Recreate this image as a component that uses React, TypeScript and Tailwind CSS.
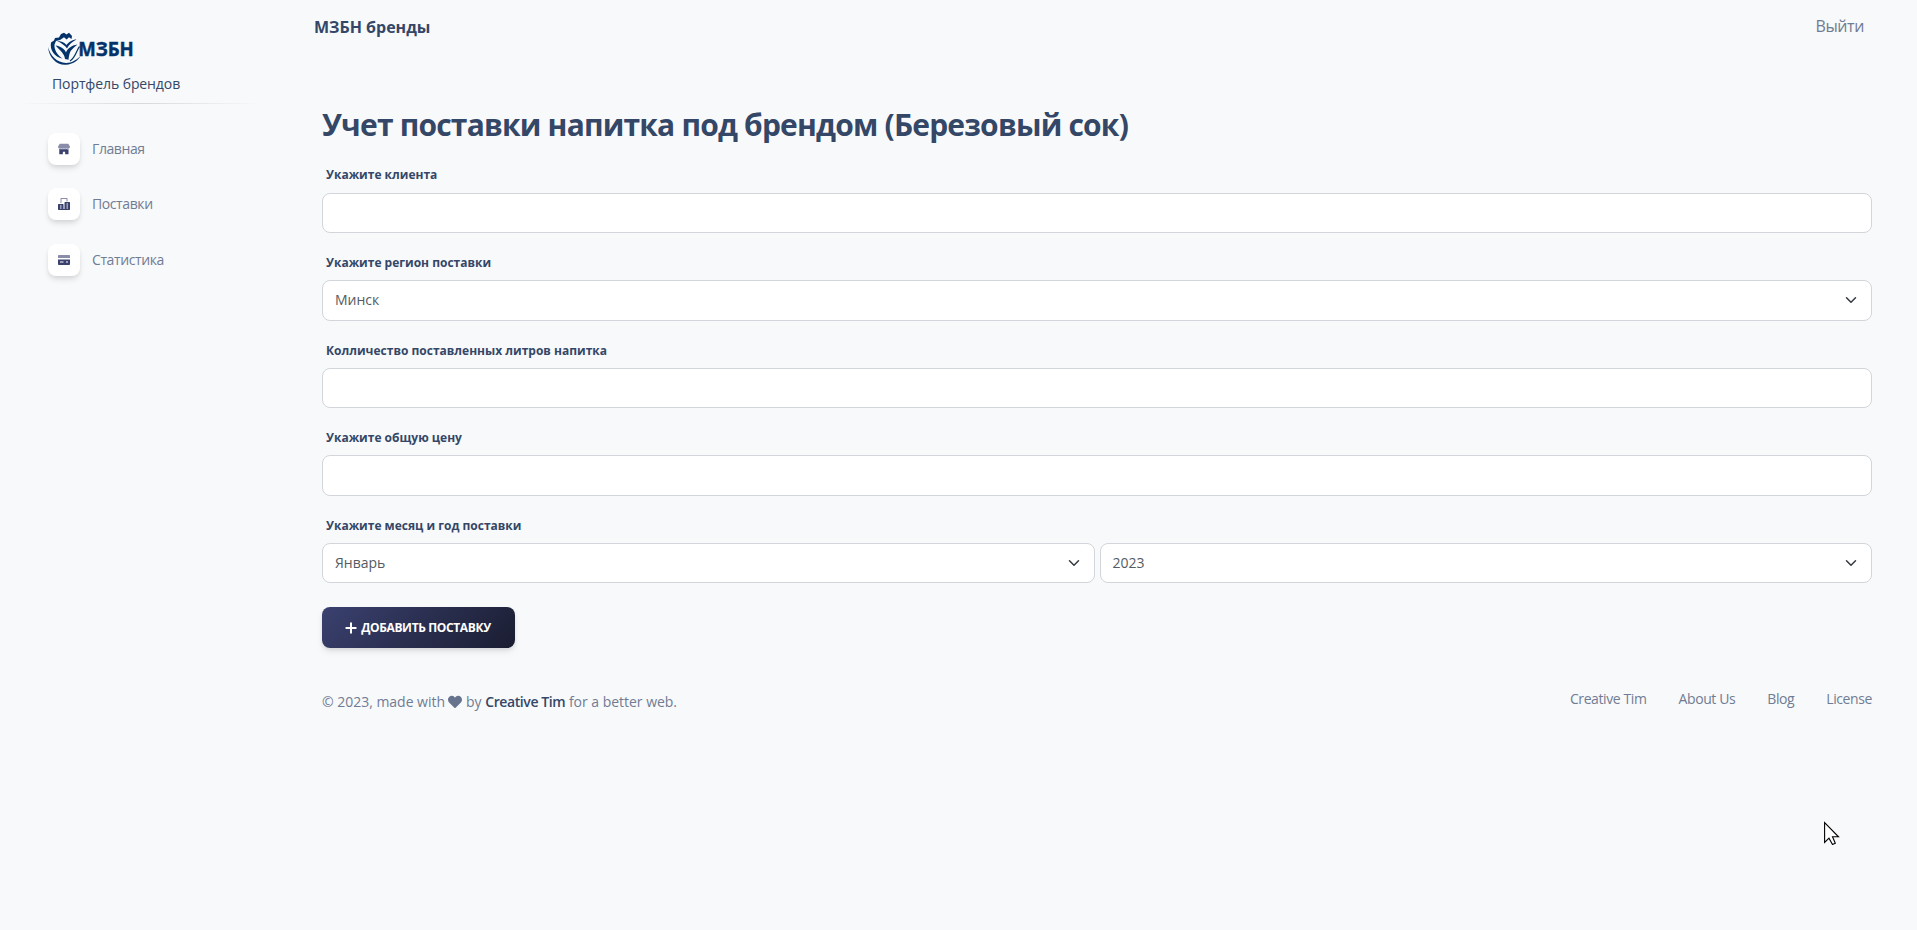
import type { ReactNode } from "react";

function Logo() {
  return (
    <svg className="block h-[34px] w-[90px]" viewBox="0 0 90 34" fill="none">
      <g fill="#04336b">
        <path d="M0 15C1 26 9 33.500 18 32.800C25 32.300 30 28.500 32.500 24C28 28.500 23.500 31 18 30.900C9 30.700 2.500 24 0 15Z" />
        <path d="M3 10.500L6 8.500L7 6L11 5.500L13 2L16 .8L18.500 2.500L21 .8L24 4L23.500 7L21 5.200L18.600 7.500L16 5.200L12 8L8 9L6.500 12.500C6 17 8.500 22.500 14.500 26.500C6.500 25 1.500 18 3 10.500Z" />
        <path d="M7.500 13.500C12 14 16.500 16.500 18 20.500C19.500 16.500 23 13.500 29.500 12.500C25 16 22.500 18.500 21.800 21C21 23.500 20.800 25.500 20.500 27.800L17 27C16.500 21.500 12 18.500 7.500 13.500Z" />
        <path d="M9 9C13 9 16.500 10.500 18.500 13C20.500 10 24.500 7.500 28.500 7.500C24.500 9.500 20.800 12.500 19 16.500C17 13.500 13.500 11 9 9Z" />
      </g>
      <path d="M31.500 14.500C29 17 28 25 22 29" stroke="#04336b" strokeWidth="1.200" />
      <text x="30.200" y="24.200" textLength="55.600" lengthAdjust="spacingAndGlyphs" fill="#04336b" stroke="#04336b" strokeWidth=".45" fontSize="20" fontWeight="700" fontFamily="Open Sans, sans-serif">МЗБН</text>
    </svg>
  );
}

function ShopIcon() {
  return (
    <svg className="size-3" viewBox="0 0 47 42" fill="#3a416f">
      <path opacity=".6" d="M46.720 10.742L40.845.950C40.490.361 39.853 0 39.167 0H7.833C7.147 0 6.510.361 6.155.950L.280 10.742C.097 11.046 0 11.395 0 11.750C-.008 16.084 3.484 19.605 7.800 19.615H7.816C9.755 19.618 11.624 18.890 13.052 17.574C15.996 20.292 20.515 20.292 23.459 17.574C26.406 20.298 30.932 20.298 33.880 17.574C36.252 19.756 39.689 20.256 42.585 18.847C45.480 17.438 47.275 14.384 47 11.750C47 11.395 46.903 11.046 46.720 10.742Z" />
      <path d="M39.198 22.491C37.378 22.493 35.584 22.074 33.957 21.267L33.922 21.286C31.142 22.682 27.926 22.756 25.084 21.490L24.484 21.220C21.748 22.659 18.491 22.765 15.647 21.511L15.032 21.224C12.283 22.647 9.060 22.733 6.228 21.458C5.808 21.270 5.401 21.054 5.010 20.810V40.375C5.010 41.457 5.803 42 7.003 42H19V32H28V42H39.198C40.280 42 41.157 41.457 41.157 40.375V22.260C40.515 22.408 39.858 22.485 39.198 22.491Z" />
    </svg>
  );
}

function OfficeIcon() {
  return (
    <svg className="size-3" viewBox="0 0 42 42" fill="#3a416f">
      <path opacity=".6" d="M12.250 17.500H8.750V1.750C8.750.783 9.533 0 10.500 0H31.500C32.467 0 33.250.783 33.250 1.750V12.250H29.750V3.500H12.250V17.500Z" />
      <path fillRule="evenodd" d="M40.250 14H24.500C23.533 14 22.750 14.783 22.750 15.750V38.500H19.250V22.750C19.250 21.783 18.467 21 17.500 21H1.750C.783 21 0 21.783 0 22.750V40.250C0 41.217.783 42 1.750 42H40.250C41.217 42 42 41.217 42 40.250V15.750C42 14.783 41.217 14 40.250 14ZM12.250 36.750H7V33.250H12.250V36.750ZM12.250 29.750H7V26.250H12.250V29.750ZM35 36.750H29.750V33.250H35V36.750ZM35 29.750H29.750V26.250H35V29.750ZM35 22.750H29.750V19.250H35V22.750Z" />
    </svg>
  );
}

function CardIcon() {
  return (
    <svg className="size-3" viewBox="0 0 43 36" fill="#3a416f">
      <path opacity=".6" d="M43 10.747V3.583C43 1.603 41.398 0 39.417 0H3.583C1.603 0 0 1.603 0 3.583V10.747H43Z" />
      <path fillRule="evenodd" d="M0 16.125V32.250C0 34.230 1.603 35.833 3.583 35.833H39.417C41.398 35.833 43 34.230 43 32.250V16.125H0ZM19.708 26.875H7.167V23.292H19.708V26.875ZM35.833 26.875H28.667V23.292H35.833V26.875Z" />
    </svg>
  );
}

function NavItem({ icon, children }: { icon: ReactNode; children: ReactNode }) {
  return (
    <a className="flex h-8 items-center gap-3">
      <span className="flex size-8 items-center justify-center rounded-lg bg-white shadow-[0_4px_6px_-1px_rgba(20,20,20,0.12),0_2px_4px_-1px_rgba(20,20,20,0.07)]">
        {icon}
      </span>
      <span className="text-sm tracking-[-0.4px] text-[#707c94]">{children}</span>
    </a>
  );
}

function Field({ label, children }: { label: string; children: ReactNode }) {
  return (
    <div className="mb-4 pt-1">
      <label className="mb-2 ml-1 block text-xs leading-[19.2px] font-bold text-[#344767]">{label}</label>
      {children}
    </div>
  );
}

function TextInput() {
  return <input className="block h-[40.4px] w-full rounded-lg border border-[#d2d6da] bg-white px-3 text-sm outline-none" />;
}

function SelectBox({ value }: { value: string }) {
  return (
    <div className="flex h-[40.4px] flex-1 items-center justify-between rounded-lg border border-[#d2d6da] bg-white px-3 text-sm text-[#545b62]">
      <span>{value}</span>
      <svg className="mr-0.5 size-3" viewBox="0 0 16 16" fill="none" stroke="#343a40" strokeWidth="2" strokeLinecap="round" strokeLinejoin="round">
        <path d="M2 5l6 6 6-6" />
      </svg>
    </div>
  );
}

export default function App() {
  return (
    <div className="relative flex h-[930px] w-full overflow-hidden bg-[#f8f9fa] font-['Open_Sans',sans-serif]">
      <aside className="w-[290px] shrink-0 pt-8 pl-4">
        <div className="pl-8">
          <Logo />
          <div className="mt-2 ml-1 text-sm leading-5 font-medium tracking-[-0.1px] text-[#344767]">Портфель брендов</div>
        </div>
        <div className="mt-[9px] ml-1 h-px w-[242px] bg-linear-to-r from-transparent via-black/13 to-transparent" />
        <nav className="mt-[29px] flex flex-col gap-[23.400px] pl-8">
          <NavItem icon={<ShopIcon />}>Главная</NavItem>
          <NavItem icon={<OfficeIcon />}>Поставки</NavItem>
          <NavItem icon={<CardIcon />}>Статистика</NavItem>
        </nav>
      </aside>

      <main className="flex-1 pr-[45px] pl-8">
        <header className="-ml-2 flex h-[54px] items-center justify-between pr-2">
          <h6 className="text-base font-bold text-[#344767]">МЗБН бренды</h6>
          <a className="pb-0.5 text-base tracking-[-0.4px] text-[#707c94]">Выйти</a>
        </header>

        <h3 className="mt-[50px] text-[30px] leading-[41px] font-bold tracking-[-0.8px] text-[#344767]">
          Учет поставки напитка под брендом (Березовый сок)
        </h3>

        <form className="mt-[16.400px]">
          <Field label="Укажите клиента"><TextInput /></Field>
          <Field label="Укажите регион поставки"><div className="flex"><SelectBox value="Минск" /></div></Field>
          <Field label="Колличество поставленных литров напитка"><TextInput /></Field>
          <Field label="Укажите общую цену"><TextInput /></Field>
          <Field label="Укажите месяц и год поставки">
            <div className="flex gap-[5px]">
              <SelectBox value="Январь" />
              <SelectBox value="2023" />
            </div>
          </Field>
          <button type="button" className="mt-6 flex h-[41px] w-[193px] items-center justify-center gap-1 rounded-lg bg-linear-[135deg] from-[#3a416f] to-[#1a1d31] pr-px text-xs font-bold tracking-[-0.37px] text-white shadow-[0_4px_7px_-1px_rgba(0,0,0,0.11),0_2px_4px_-1px_rgba(0,0,0,0.07)]">
            <svg className="size-3" viewBox="0 0 12 12" stroke="white" strokeWidth="2" strokeLinecap="round"><path d="M6 1.300v9.400M1.300 6h9.400" /></svg>
            ДОБАВИТЬ ПОСТАВКУ
          </button>
        </form>

        <footer className="mt-[41px] flex items-start justify-between text-sm text-[#707c94]">
          <div className="flex items-center pt-[3px] tracking-[-0.02px]">
            © 2023, made with
            <svg className="mr-1 ml-[3px] h-[14px] w-[14px]" viewBox="0 0 512 512" fill="#67748e">
              <path d="M462.300 62.600C407.500 15.900 326 24.300 275.700 76.200L256 96.500l-19.700-20.300C186.100 24.300 104.500 15.900 49.700 62.600c-62.800 53.600-66.100 149.800-9.900 207.900l193.500 199.800c12.500 12.900 32.800 12.900 45.300 0l193.500-199.800c56.300-58.100 53-154.300-9.800-207.900z" />
            </svg>
            by&nbsp;<span className="font-semibold tracking-[-0.4px] text-[#344767]">Creative Tim</span>&nbsp;for a better web.
          </div>
          <div className="flex gap-8 tracking-[-0.400px]">
            <a>Creative Tim</a>
            <a>About Us</a>
            <a>Blog</a>
            <a>License</a>
          </div>
        </footer>
      </main>

      <svg className="absolute top-[821px] left-[1824px] h-6 w-4" viewBox="0 0 16 24" fill="white" stroke="black" strokeWidth="1.100">
        <path d="M.6 1.500V21.500L5 17.200L8.500 23.500L11.300 22.300L8.500 15.800H14.500Z" />
      </svg>
    </div>
  );
}
